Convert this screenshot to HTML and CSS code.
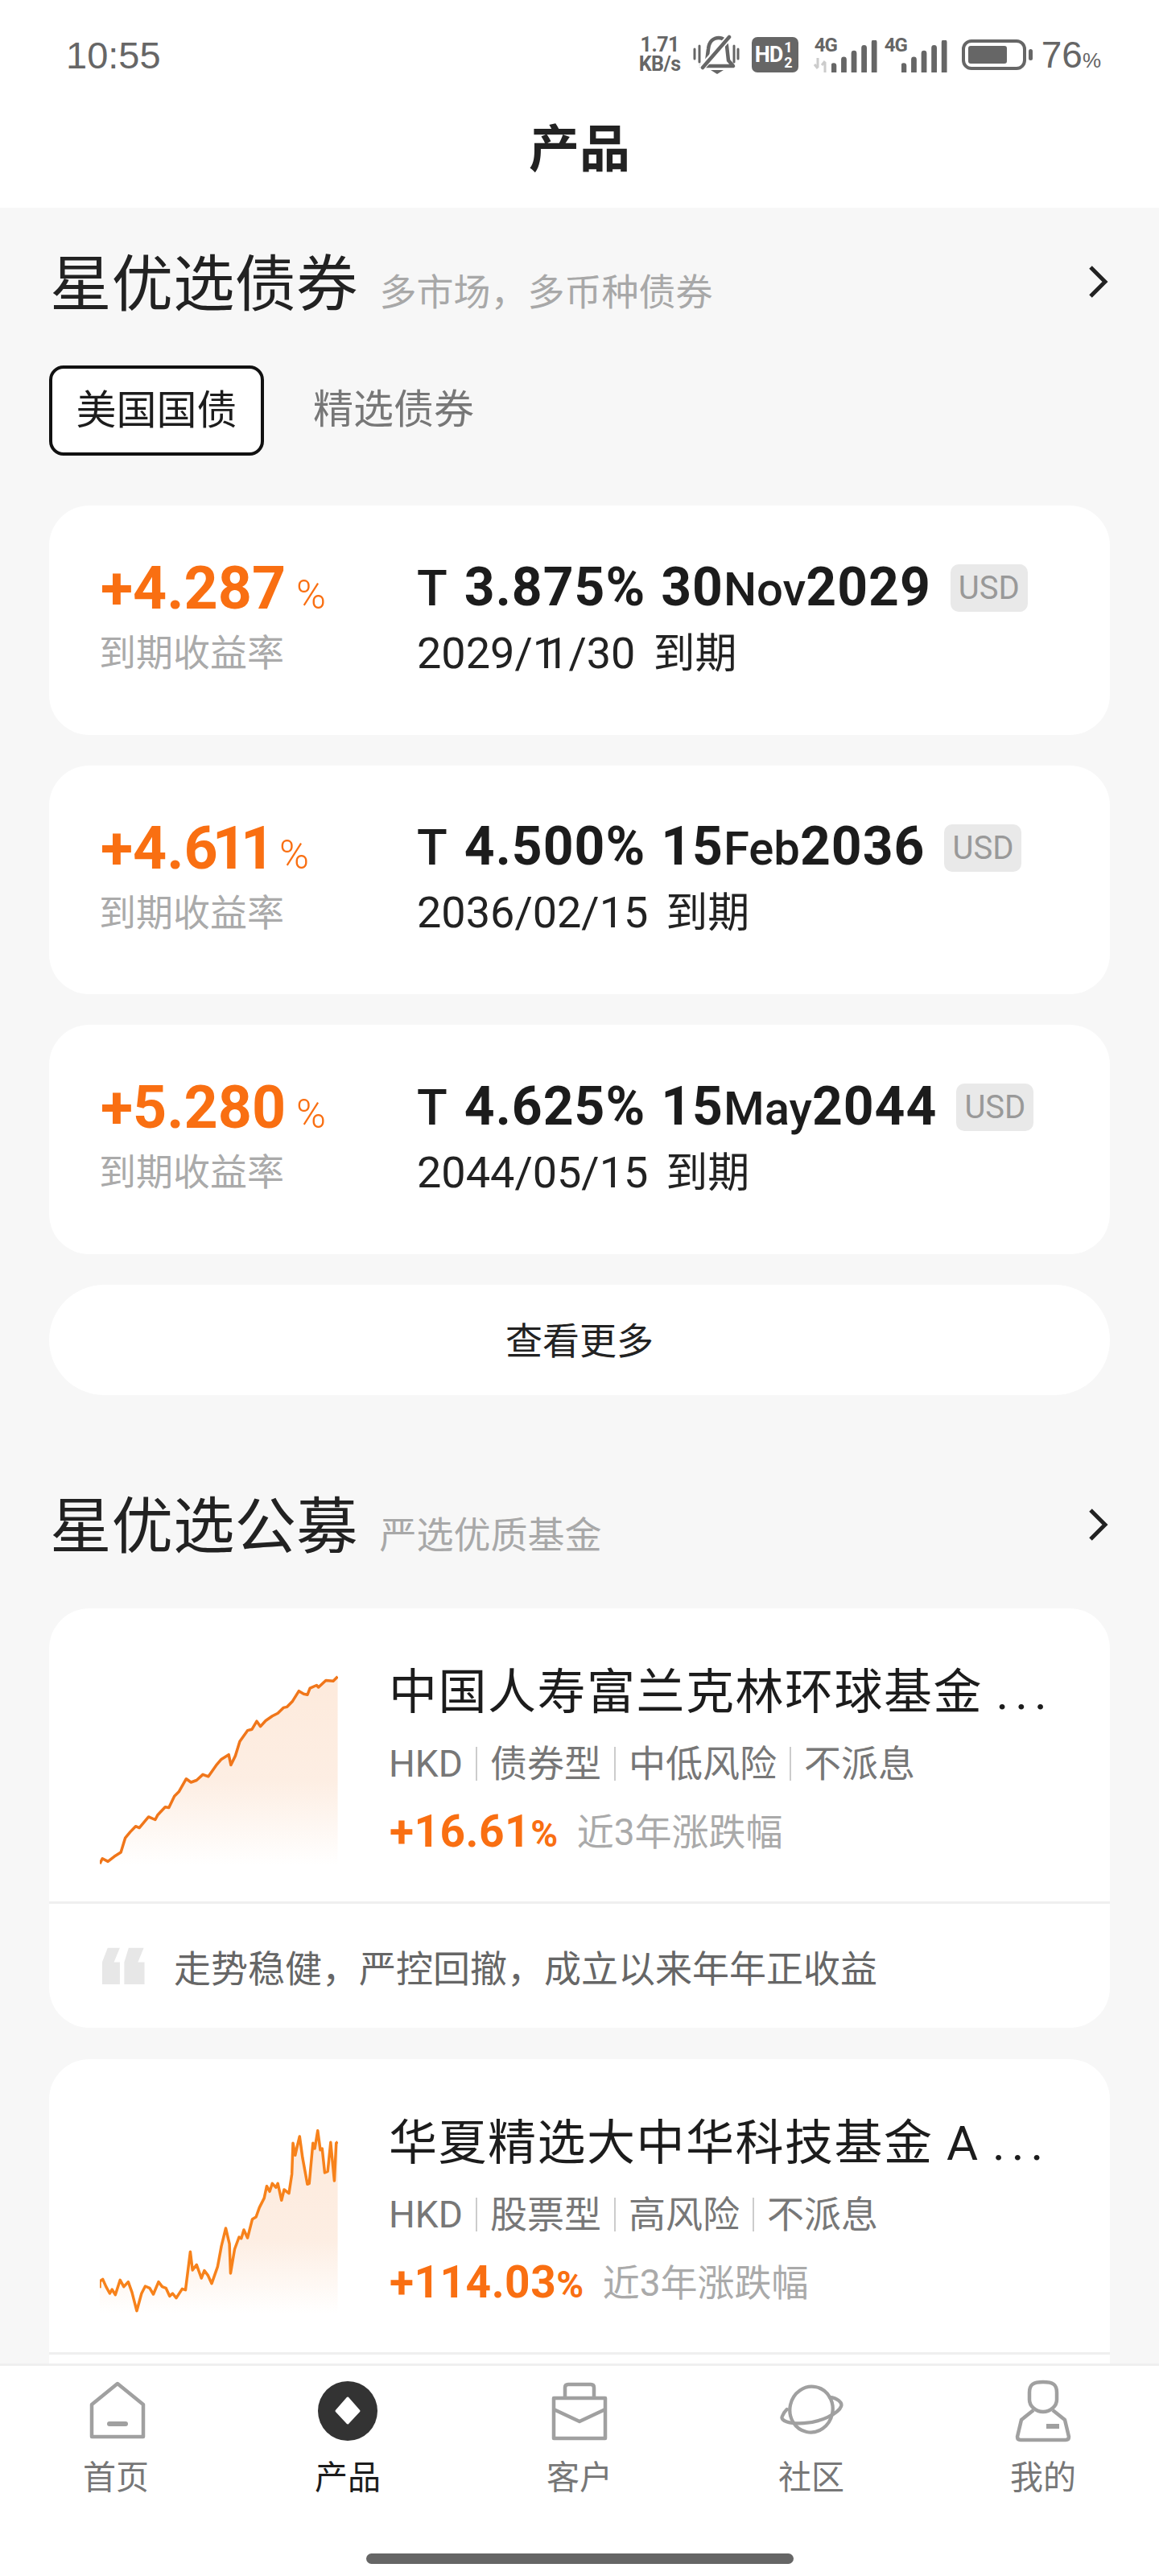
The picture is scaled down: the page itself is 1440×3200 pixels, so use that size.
FILE: index.html
```html
<!DOCTYPE html>
<html lang="zh-CN">
<head>
    <meta charset="UTF-8">
    <meta name="viewport" content="width=device-width, initial-scale=1.0">
    <title>产品</title>
    <link rel="stylesheet" href="styles.css">
</head>
<body>
<div class="phone">
    <header class="top">
        <div class="status">
            <span class="time">10:55</span>
            <div class="status-right">
                <span class="speed">1.71<br>KB/s</span>
                <svg class="bell" viewBox="0 0 58 50" fill="none" stroke="#666" stroke-width="4.5">
                    <path d="M17 34 L19 18 C20 8 26 4 32 4 C38 4 41 8 42 14 L44 32 L50 39 L10 39 Z" stroke-linejoin="round"/>
                    <path d="M10 42 L46 2" stroke="#fff" stroke-width="8"/>
                    <path d="M12 41 L45 3" stroke-linecap="round"/>
                    <path d="M2 18 V30 M8 14 V34 M51 14 V34 M56 18 V30" stroke-width="3" stroke-linecap="round"/>
                    <path d="M22 44 H38 L30 49 Z" fill="#666" stroke="none"/>
                </svg>
                <span class="hd">HD<span class="hd-sim">1<br>2</span></span>
                <div class="signal">
                    <span class="net">4G</span>
                    <svg class="arrows" viewBox="0 0 20 18"><path d="M5 0 V12 M1 8 L5 13 M14 18 V5 M10 9 L14 4" stroke="#ccc" stroke-width="3" fill="none"/></svg>
                    <svg class="bars" viewBox="0 0 60 40"><path d="M3 40 V32 M16 40 V24 M29 40 V16 M42 40 V9 M55 40 V2" stroke="#666" stroke-width="7" stroke-linecap="round"/></svg>
                </div>
                <div class="signal signal-b">
                    <span class="net">4G</span>
                    <svg class="bars" viewBox="0 0 60 40"><path d="M3 40 V32 M16 40 V24 M29 40 V16 M42 40 V9 M55 40 V2" stroke="#666" stroke-width="7" stroke-linecap="round"/></svg>
                </div>
                <div class="battery"><span class="battery-level"></span></div>
                <span class="battery-tip"></span>
                <span class="percent">76<small>%</small></span>
            </div>
        </div>
        <h1 class="page-title">产品</h1>
    </header>

    <main class="content">
        <div class="section-head">
            <h2>星优选债券</h2>
            <span class="section-sub">多市场，多币种债券</span>
            <svg class="chevron" viewBox="0 0 26 42" fill="none"><path d="M4 3 L22 21 L4 39" stroke="#222" stroke-width="5"/></svg>
        </div>
        <div class="tabs">
            <span class="tab tab-active">美国国债</span>
            <span class="tab">精选债券</span>
        </div>

        <div class="bond-list">
            <div class="bond">
                <div class="bond-rate">
                    <div class="rate">+4.287<small>%</small></div>
                    <div class="rate-label">到期收益率</div>
                </div>
                <div class="bond-info">
                    <div class="bond-name"><span class="t">T</span><b>3.875%</b><span class="name-date"><b>30</b>Nov<b>2029</b></span><span class="usd">USD</span></div>
                    <div class="bond-date">2029/<span class="one">1</span>1/30<span class="due">到期</span></div>
                </div>
            </div>
            <div class="bond">
                <div class="bond-rate">
                    <div class="rate">+4.<span class="rate-one">61</span><span class="rate-one">1</span><small>%</small></div>
                    <div class="rate-label">到期收益率</div>
                </div>
                <div class="bond-info">
                    <div class="bond-name"><span class="t">T</span><b>4.500%</b><span class="name-date"><b>15</b>Feb<b>2036</b></span><span class="usd">USD</span></div>
                    <div class="bond-date">2036/02/15<span class="due">到期</span></div>
                </div>
            </div>
            <div class="bond">
                <div class="bond-rate">
                    <div class="rate">+5.280<small>%</small></div>
                    <div class="rate-label">到期收益率</div>
                </div>
                <div class="bond-info">
                    <div class="bond-name"><span class="t">T</span><b>4.625%</b><span class="name-date"><b>15</b>May<b>2044</b></span><span class="usd">USD</span></div>
                    <div class="bond-date">2044/05/15<span class="due">到期</span></div>
                </div>
            </div>
            <div class="more">查看更多</div>
        </div>

        <div class="section-head section-head-b">
            <h2>星优选公募</h2>
            <span class="section-sub">严选优质基金</span>
            <svg class="chevron" viewBox="0 0 26 42" fill="none"><path d="M4 3 L22 21 L4 39" stroke="#222" stroke-width="5"/></svg>
        </div>

        <div class="fund-list">
            <div class="fund">
                <div class="fund-main">
                    <svg class="chart chart-a" viewBox="183 280 645 660" preserveAspectRatio="none">
                        <defs>
                            <linearGradient id="fillA" x1="0" y1="0" x2="0" y2="1">
                                <stop offset="0" stop-color="#fdeadc"/>
                                <stop offset="0.55" stop-color="#fdeee3"/>
                                <stop offset="1" stop-color="#fff"/>
                            </linearGradient>
                        </defs>
                        <polygon fill="url(#fillA)" points="183,935 190,917 205,927 222,910 240,895 252,845 265,825 280,805 290,810 315,772 333,782 340,765 360,738 370,740 385,700 397,685 417,640 430,652 445,645 462,625 477,632 500,590 512,572 532,556 538,592 550,560 562,510 583,472 595,468 608,440 618,458 632,438 650,422 665,412 680,393 690,390 705,370 722,335 735,345 745,348 752,325 770,315 775,322 795,298 815,300 827,285 827,940 183,940"/>
                        <polyline class="line-a" points="183,935 190,917 205,927 222,910 240,895 252,845 265,825 280,805 290,810 315,772 333,782 340,765 360,738 370,740 385,700 397,685 417,640 430,652 445,645 462,625 477,632 500,590 512,572 532,556 538,592 550,560 562,510 583,472 595,468 608,440 618,458 632,438 650,422 665,412 680,393 690,390 705,370 722,335 735,345 745,348 752,325 770,315 775,322 795,298 815,300 827,285"/>
                    </svg>
                    <div class="fund-info">
                        <div class="fund-name">中国人寿富兰克林环球基金 <span class="dots">...</span></div>
                        <div class="fund-meta"><span>HKD</span><i></i><span>债券型</span><i></i><span>中低风险</span><i></i><span>不派息</span></div>
                        <div class="fund-perf"><b>+16.61<small>%</small></b><span>近3年涨跌幅</span></div>
                    </div>
                </div>
                <div class="fund-quote">
                    <svg class="quote-mark" viewBox="188 1228 118 130" preserveAspectRatio="none"><path fill="#e7e7e7" d="M190 1358 V1280 L205 1230 H238 L222 1280 H238 V1358 Z M250 1358 V1280 L262 1230 H303 L287 1280 H305 V1358 Z"/></svg>
                    <span>走势稳健，严控回撤，成立以来年年正收益</span>
                </div>
            </div>
            <div class="fund">
                <div class="fund-main">
                    <svg class="chart chart-b" viewBox="183 310 645 690" preserveAspectRatio="none">
                        <defs>
                            <linearGradient id="fillB" x1="0" y1="0" x2="0" y2="1">
                                <stop offset="0" stop-color="#fdeadc"/>
                                <stop offset="0.6" stop-color="#fdeee3"/>
                                <stop offset="1" stop-color="#fff"/>
                            </linearGradient>
                        </defs>
                        <polygon fill="url(#fillB)" points="183,905 183,880 191,872 200,900 210,925 216,910 225,930 238,875 248,900 260,882 270,920 283,990 296,925 306,898 318,905 328,928 342,882 352,900 362,905 372,935 380,925 390,942 406,908 415,912 428,770 434,838 445,818 458,868 466,840 476,858 486,888 502,825 512,750 524,682 534,740 537,850 548,760 560,715 566,720 573,688 583,718 596,648 606,640 615,605 628,570 635,525 643,545 650,515 660,530 665,515 675,578 682,538 695,552 703,480 706,365 712,410 716,385 724,340 732,420 740,480 745,518 750,515 760,365 765,385 773,318 780,390 785,385 792,475 800,470 808,362 818,505 823,365 827,360 827,1000 183,1000"/>
                        <polyline class="line-b" points="183,905 183,880 191,872 200,900 210,925 216,910 225,930 238,875 248,900 260,882 270,920 283,990 296,925 306,898 318,905 328,928 342,882 352,900 362,905 372,935 380,925 390,942 406,908 415,912 428,770 434,838 445,818 458,868 466,840 476,858 486,888 502,825 512,750 524,682 534,740 537,850 548,760 560,715 566,720 573,688 583,718 596,648 606,640 615,605 628,570 635,525 643,545 650,515 660,530 665,515 675,578 682,538 695,552 703,480 706,365 712,410 716,385 724,340 732,420 740,480 745,518 750,515 760,365 765,385 773,318 780,390 785,385 792,475 800,470 808,362 818,505 823,365 827,360"/>
                    </svg>
                    <div class="fund-info">
                        <div class="fund-name">华夏精选大中华科技基金 A <span class="dots">...</span></div>
                        <div class="fund-meta"><span>HKD</span><i></i><span>股票型</span><i></i><span>高风险</span><i></i><span>不派息</span></div>
                        <div class="fund-perf"><b>+114.03<small>%</small></b><span>近3年涨跌幅</span></div>
                    </div>
                </div>
                <div class="fund-quote"></div>
            </div>
        </div>
    </main>

    <nav class="tabbar">
        <div class="tabbar-items">
            <div class="nav-item">
                <svg class="nav-icon nav-icon-home" viewBox="0 0 76 76" fill="none" stroke="#a0a0a0" stroke-width="4.5" stroke-linejoin="round">
                    <path d="M38 4 L6 30 V70 H70 V30 Z"/>
                    <path d="M28 54 H48" stroke-width="6" stroke-linecap="round"/>
                </svg>
                <span>首页</span>
            </div>
            <div class="nav-item nav-item-active">
                <svg class="nav-icon" viewBox="0 0 76 76">
                    <circle cx="38" cy="38" r="37" fill="#333"/>
                    <path d="M38 22 L52 38 L38 53 L24 38 Z" fill="#fff" stroke="#fff" stroke-width="3" stroke-linejoin="round"/>
                </svg>
                <span>产品</span>
            </div>
            <div class="nav-item">
                <svg class="nav-icon nav-icon-case" viewBox="0 0 72 72" fill="none" stroke="#a0a0a0" stroke-width="4.5" stroke-linejoin="round">
                    <path d="M18 20 V7 Q18 3 22 3 H50 Q54 3 54 7 V20"/>
                    <path d="M4 20 H68 V70 H4 Z"/>
                    <path d="M4 34 L36 49 L68 34"/>
                </svg>
                <span>客户</span>
            </div>
            <div class="nav-item">
                <svg class="nav-icon" viewBox="0 0 80 76" fill="none" stroke="#a0a0a0" stroke-width="4.5">
                    <ellipse cx="40" cy="36" rx="28" ry="30" transform="rotate(12 40 36)"/>
                    <path d="M64 20 C74 21 81 27 79 32 C76 41 52 53 30 54 C12 55 -1 51 2 45 C3 42 5 39 8 36" stroke-linecap="round"/>
                </svg>
                <span>社区</span>
            </div>
            <div class="nav-item">
                <svg class="nav-icon" viewBox="0 0 76 76" fill="none" stroke="#a0a0a0" stroke-width="4.5" stroke-linejoin="round">
                    <path d="M21 15 C21 5 26 2 38 2 C50 2 55 5 55 15 L55 24 C55 32 47 39 38 39 C29 39 21 32 21 24 Z"/>
                    <path d="M26 37 L11 49 L6 70 Q6 74 10 74 H66 Q70 74 70 70 L65 49 L50 37"/>
                    <path d="M42 57 H58" stroke-width="6"/>
                </svg>
                <span>我的</span>
            </div>
        </div>
        <div class="home-bar"></div>
    </nav>
</div>
</body>
</html>
```

FILE: styles.css
```css
* {
    box-sizing: border-box;
}
body {
    margin: 0;
    font-family: Roboto, "Noto Sans CJK SC", sans-serif;
    background: #f7f7f7;
    color: #1c1c1c;
}
.phone {
    width: 1440px;
    height: 3200px;
    display: flex;
    flex-direction: column;
    overflow: hidden;
}

/* status bar and title */
.top {
    background: #fff;
    height: 258px;
    flex: none;
}
.status {
    height: 132px;
    padding: 4px 72px 0 82px;
    display: flex;
    align-items: center;
    justify-content: space-between;
    color: #666;
}
.time {
    font-size: 47px;
    font-family: "Liberation Sans", sans-serif;
}
.status-right {
    display: flex;
    align-items: center;
}
.speed {
    font-size: 25px;
    line-height: 24px;
    font-weight: 700;
    text-align: center;
    width: 54px;
    letter-spacing: -0.5px;
}
.bell {
    width: 58px;
    height: 50px;
    margin-left: 14px;
}
.hd {
    width: 58px;
    height: 44px;
    margin-left: 15px;
    background: #666;
    color: #fff;
    border-radius: 7px;
    font-size: 27px;
    font-weight: 700;
    display: flex;
    align-items: center;
    padding-left: 4px;
    letter-spacing: -1px;
}
.hd-sim {
    font-size: 18px;
    line-height: 19px;
    margin-left: 2px;
    text-align: center;
}
.signal {
    width: 80px;
    height: 44px;
    margin-left: 19px;
    position: relative;
}
.signal-b {
    margin-left: 7px;
}
.net {
    position: absolute;
    left: 1px;
    top: -4px;
    font-size: 24px;
    font-weight: 700;
    letter-spacing: -1px;
}
.arrows {
    position: absolute;
    left: 0;
    bottom: 0;
    width: 20px;
    height: 18px;
}
.bars {
    position: absolute;
    right: 0;
    bottom: 0;
    width: 58px;
    height: 40px;
}
.battery {
    width: 80px;
    height: 38px;
    margin-left: 17px;
    border: 4px solid #666;
    border-radius: 12px;
    padding: 4px;
}
.battery-level {
    display: block;
    width: 48px;
    height: 22px;
    background: #666;
    border-radius: 3px;
}
.battery-tip {
    width: 5px;
    height: 14px;
    margin-left: 3px;
    background: #666;
    border-radius: 3px;
}
.percent {
    font-size: 46px;
    margin-left: 11px;
    font-family: "Liberation Sans", sans-serif;
}
.percent small {
    font-size: 26px;
}
.page-title {
    margin: 0;
    text-align: center;
    font-size: 63px;
    line-height: 108px;
    font-weight: 700;
    color: #222;
}

/* main list */
.content {
    flex: 1;
    min-height: 0;
    overflow: hidden;
    padding: 50px 61px 0;
}
.section-head {
    display: flex;
    align-items: center;
    height: 84px;
}
.section-head-b {
    margin-top: 119px;
}
.section-head h2 {
    margin: 0 0 8px 1px;
    font-size: 76.5px;
    font-weight: 400;
    color: #222;
}
.section-sub {
    margin-left: 27px;
    margin-top: 18px;
    font-size: 46px;
    color: #a8a8a8;
}
.chevron {
    width: 26px;
    height: 42px;
    margin-left: auto;
    margin-right: 2px;
}
.tabs {
    display: flex;
    align-items: center;
    margin-top: 62px;
}
.tab {
    font-size: 50px;
    color: #777;
    margin-left: 61px;
    padding-bottom: 12px;
}
.tab-active {
    margin-left: 0;
    width: 267px;
    height: 112px;
    background: #fff;
    border: 4px solid #111;
    border-radius: 18px;
    color: #1c1c1c;
    display: flex;
    align-items: center;
    justify-content: center;
    padding-bottom: 10px;
}
.bond-list {
    margin-top: 62px;
    display: flex;
    flex-direction: column;
    gap: 38px;
}
.bond {
    height: 284.5px;
    padding-top: 2px;
    background: #fff;
    border-radius: 50px;
    display: flex;
    align-items: center;
}
.bond-rate {
    width: 457px;
    padding-left: 64px;
    flex: none;
}
.rate {
    font-size: 73.5px;
    line-height: 80px;
    font-weight: 700;
    color: #f96f12;
    white-space: nowrap;
}
.rate small {
    font-size: 50px;
    font-weight: 300;
    margin-left: 13px;
    line-height: 40px;
}
.rate-one {
    letter-spacing: -7px;
}
.rate-label {
    margin-left: -2px;
    font-size: 46px;
    line-height: 80px;
    color: #aaa;
}
.bond-name {
    display: flex;
    align-items: baseline;
    font-size: 66px;
    line-height: 80px;
    color: #1c1c1c;
}
.bond-name b {
    font-weight: 700;
    letter-spacing: 1px;
}
.t {
    font-size: 62px;
    font-weight: 500;
    margin-right: 21px;
}
.name-date {
    margin-left: 19px;
    font-size: 58px;
    font-weight: 500;
}
.name-date b {
    font-size: 66px;
}
.usd {
    align-self: center;
    margin-left: 24px;
    width: 96px;
    height: 59px;
    background: #e9e9e9;
    border-radius: 10px;
    color: #999;
    font-size: 40px;
    line-height: 59px;
    text-align: center;
}
.bond-date {
    font-size: 54px;
    line-height: 80px;
    color: #222;
}
.one {
    letter-spacing: -16px;
}
.due {
    margin-left: 22px;
    font-size: 52px;
}
.more {
    height: 137px;
    padding-bottom: 4px;
    background: #fff;
    border-radius: 69px;
    display: flex;
    align-items: center;
    justify-content: center;
    font-size: 46px;
    color: #222;
}

/* fund cards */
.fund-list {
    margin-top: 62px;
    display: flex;
    flex-direction: column;
    gap: 39px;
}
.fund {
    background: #fff;
    border-radius: 50px;
    flex: none;
}
.fund-main {
    height: 367px;
    display: flex;
    border-bottom: 3px solid #efefef;
}
.chart {
    width: 296px;
    flex: none;
    margin-left: 63px;
}
.chart-a {
    height: 236px;
    margin-top: 83px;
}
.chart-b {
    height: 230px;
    margin-top: 86px;
}
.line-a, .line-b {
    fill: none;
    stroke-linejoin: round;
    vector-effect: non-scaling-stroke;
}
.line-a {
    stroke: #f0761a;
    stroke-width: 3.5;
}
.line-b {
    stroke: #f7821b;
    stroke-width: 3.5;
}
.fund-info {
    margin-left: 63px;
    padding-top: 70px;
    min-width: 0;
}
.fund-name {
    font-size: 60px;
    line-height: 70px;
    letter-spacing: 1.5px;
    white-space: nowrap;
    color: #1c1c1c;
}
.dots {
    letter-spacing: 8px;
}
.fund-meta {
    margin-top: 18px;
    display: flex;
    align-items: center;
    gap: 16px;
    font-size: 46px;
    line-height: 70px;
    color: #777;
}
.fund-meta i {
    width: 2px;
    height: 42px;
    background: #ccc;
}
.fund-perf {
    margin-top: 14px;
    margin-left: 1px;
    display: flex;
    align-items: center;
    line-height: 70px;
}
.fund-perf b {
    font-size: 55px;
    letter-spacing: 0.5px;
    color: #f96f12;
}
.fund-perf b small {
    font-size: 46px;
}
.fund-perf span {
    margin-left: 23px;
    font-size: 46px;
    color: #aaa;
}
.fund-quote {
    height: 154px;
    display: flex;
    align-items: center;
    padding-left: 65px;
    font-size: 46px;
    color: #666;
}
.quote-mark {
    width: 54px;
    height: 46px;
    margin-right: 36px;
    flex: none;
}

/* bottom nav */
.tabbar {
    flex: none;
    height: 264px;
    background: #fff;
    border-top: 3px solid #efefef;
}
.tabbar-items {
    display: grid;
    grid-template-columns: repeat(5, 1fr);
    padding-top: 18px;
}
.nav-item {
    display: flex;
    flex-direction: column;
    align-items: center;
    font-size: 41px;
    line-height: 56px;
    color: #777;
}
.nav-item-active {
    color: #1c1c1c;
}
.nav-icon {
    width: 76px;
    height: 76px;
    margin-bottom: 17px;
    overflow: visible;
}
.nav-icon-home {
    margin-left: 4px;
}
.nav-icon-case {
    width: 72px;
    height: 72px;
    margin-top: 2px;
    margin-bottom: 19px;
}
.home-bar {
    width: 531px;
    height: 13px;
    margin: 66px auto 0;
    background: #666;
    border-radius: 7px;
}
```
